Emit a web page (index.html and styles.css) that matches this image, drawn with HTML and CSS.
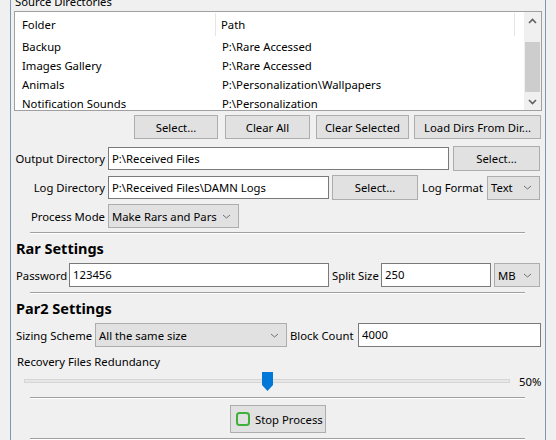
FILE: index.html
```html
<!DOCTYPE html>
<html>
<head>
<meta charset="utf-8">
<link rel="stylesheet" href="styles.css">
</head>
<body>
<div class="group">
  <div class="legend">Source Directories</div>
  <div class="list">
    <div class="lv">
      <div class="lv-head">
        <div class="h1">Folder</div>
        <div class="h2">Path</div>
      </div>
      <div class="lv-row"><div class="c1">Backup</div><div class="c2">P:\Rare Accessed</div></div>
      <div class="lv-row"><div class="c1">Images Gallery</div><div class="c2">P:\Rare Accessed</div></div>
      <div class="lv-row"><div class="c1">Animals</div><div class="c2">P:\Personalization\Wallpapers</div></div>
      <div class="lv-row"><div class="c1">Notification Sounds</div><div class="c2">P:\Personalization</div></div>
    </div>
    <div class="vscroll">
      <div class="sb-btn"><svg width="9" height="6" viewBox="0 0 9 6"><path d="M1 5 L4.5 1.5 L8 5" fill="none" stroke="#606060" stroke-width="1.6"/></svg></div>
      <div class="sb-track"><div class="sb-thumb"></div></div>
      <div class="sb-btn"><svg width="9" height="6" viewBox="0 0 9 6"><path d="M1 1 L4.5 4.5 L8 1" fill="none" stroke="#606060" stroke-width="1.6"/></svg></div>
    </div>
  </div>

  <div class="btn-row">
    <div class="btn w-select">Select...</div>
    <div class="btn w-clearall">Clear All</div>
    <div class="btn w-clearsel">Clear Selected</div>
    <div class="btn w-load">Load Dirs From Dir...</div>
  </div>

  <div class="row row-output">
    <div class="lbl">Output Directory</div>
    <div class="tb w-out">P:\Received Files</div>
    <div class="btn w-outsel">Select...</div>
  </div>

  <div class="row row-log">
    <div class="lbl">Log Directory</div>
    <div class="tb w-log">P:\Received Files\DAMN Logs</div>
    <div class="btn w-logsel">Select...</div>
    <div class="lbl2 logfmt">Log Format</div>
    <div class="combo w-logfmt"><span>Text</span><svg class="chev" width="9" height="5" viewBox="0 0 9 5"><path d="M1 1 L4.5 4 L8 1" fill="none" stroke="#707070" stroke-width="1"/></svg></div>
  </div>

  <div class="row row-mode">
    <div class="lbl">Process Mode</div>
    <div class="combo w-mode"><span>Make Rars and Pars</span><svg class="chev" width="9" height="5" viewBox="0 0 9 5"><path d="M1 1 L4.5 4 L8 1" fill="none" stroke="#707070" stroke-width="1"/></svg></div>
  </div>

  <div class="sep sep1"></div>

  <div class="heading h-rar">Rar Settings</div>

  <div class="row row-pw">
    <div class="lbl2 pw">Password</div>
    <div class="tb w-pw">123456</div>
    <div class="lbl2 split">Split Size</div>
    <div class="tb w-split">250</div>
    <div class="combo w-mb"><span>MB</span><svg class="chev" width="9" height="5" viewBox="0 0 9 5"><path d="M1 1 L4.5 4 L8 1" fill="none" stroke="#707070" stroke-width="1"/></svg></div>
  </div>

  <div class="sep sep2"></div>

  <div class="heading h-par">Par2 Settings</div>

  <div class="row row-size">
    <div class="lbl2 sizing">Sizing Scheme</div>
    <div class="combo w-sizing"><span>All the same size</span><svg class="chev" width="9" height="5" viewBox="0 0 9 5"><path d="M1 1 L4.5 4 L8 1" fill="none" stroke="#707070" stroke-width="1"/></svg></div>
    <div class="lbl2 block">Block Count</div>
    <div class="tb w-block">4000</div>
  </div>

  <div class="recov">Recovery Files Redundancy</div>

  <div class="slider-row">
    <div class="slider">
      <div class="track"></div>
      <svg class="thumb" width="11" height="19" viewBox="0 0 11 19"><path d="M0 0 H11 V13 L5.5 19 L0 13 Z" fill="#0078d7"/></svg>
    </div>
    <div class="pct">50%</div>
  </div>

  <div class="sep sep3"></div>

  <div class="stop-row">
    <div class="btn stop">
      <svg width="14" height="14" viewBox="0 0 14 14"><rect x="1" y="1" width="12" height="12" rx="2.5" fill="none" stroke="#3fb13a" stroke-width="2"/></svg>
      <span>Stop Process</span>
    </div>
  </div>

  <div class="sep sep4"></div>
</div>
</body>
</html>
```

FILE: styles.css
```css
* { box-sizing: border-box; }
html, body {
  margin: 0;
  padding: 0;
  background: #f0f0f0;
  width: 556px;
  height: 440px;
  overflow: hidden;
}
body {
  font-family: "Segoe UI", "Noto Sans", sans-serif;
  font-size: 11.3px;
  color: #000;
}
.group {
  margin-left: 10px;
  width: 536px;
  height: 460px;
  border-left: 1px solid #7d97b8;
  border-right: 1px solid #7d97b8;
  padding: 0 2px 0 3px;
}
.legend {
  margin-top: -6px;
  height: 16px;
  line-height: 16px;
  padding-left: 1px;
  white-space: nowrap;
}
.list {
  margin-top: 1px;
  height: 100px;
  width: 528px;
  border: 1px solid #a0a0a0;
  background: #fff;
  display: flex;
  overflow: hidden;
}
.lv {
  flex: 1;
  overflow: hidden;
}
.lv-head {
  display: flex;
  height: 25px;
  align-items: center;
}
.h1 {
  width: 201px;
  padding-left: 7px;
  border-right: 1px solid #e5e5e5;
  height: 23px;
  line-height: 23px;
}
.h2 {
  width: 299px;
  padding-left: 5px;
  border-right: 1px solid #e5e5e5;
  height: 23px;
  line-height: 23px;
}
.lv-row {
  display: flex;
  height: 19px;
  line-height: 19px;
  white-space: nowrap;
}
.c1 { width: 202px; padding-left: 7px; }
.c2 { padding-left: 5px; }
.vscroll {
  width: 17px;
  background: #f0f0f0;
  display: flex;
  flex-direction: column;
}
.sb-btn {
  height: 17px;
  display: flex;
  align-items: center;
  justify-content: center;
}
.sb-track {
  flex: 1;
  padding: 13px 1px 0 1px;
}
.sb-thumb {
  height: 50px;
  background: #cdcdcd;
}

.btn {
  background: #e1e1e1;
  border: 1px solid #adadad;
  display: flex;
  align-items: center;
  justify-content: center;
  white-space: nowrap;
}
.btn-row {
  margin-top: 4px;
  height: 24px;
  display: flex;
  justify-content: flex-end;
  padding-right: 2px;
}
.btn-row .btn { height: 24px; }
.w-select { width: 84px; }
.w-clearall { width: 85px; margin-left: 7px; }
.w-clearsel { width: 93px; margin-left: 6px; }
.w-load { width: 127px; margin-left: 5px; }

.row {
  display: flex;
  align-items: center;
  white-space: nowrap;
}
.lbl {
  width: 91px;
  text-align: right;
  margin-right: 3px;
}
.lbl2 {
  flex: none;
  overflow: visible;
}
.tb {
  flex: none;
  background: #fff;
  border: 1px solid #7a7a7a;
  height: 23px;
  line-height: 21px;
  padding-left: 3px;
  overflow: hidden;
}
.combo {
  flex: none;
  background: #e1e1e1;
  border: 1px solid #adadad;
  height: 23px;
  display: flex;
  align-items: center;
  justify-content: space-between;
  padding: 0 7px 0 3px;
}
.chev { display: block; }

.row-output { margin-top: 7px; height: 25px; }
.w-out { width: 341px; }
.w-outsel { width: 87px; height: 25px; margin-left: 4px; }

.row-log { margin-top: 4px; height: 25px; }
.w-log { width: 221px; }
.w-logsel { width: 86px; height: 25px; margin-left: 3px; }
.logfmt { margin-left: 4px; width: 65px; }
.w-logfmt { width: 53px; height: 24px; }

.row-mode { margin-top: 4px; height: 24px; }
.w-mode { width: 131px; height: 24px; }

.sep {
  margin-left: 16px;
  width: 495px;
  height: 2px;
  border-top: 1px solid #a0a0a0;
  border-bottom: 1px solid #ffffff;
}
.sep1 { margin-top: 4px; }
.heading {
  font-weight: bold;
  font-size: 14.5px;
  line-height: 20px;
  height: 20px;
  padding-left: 2px;
}
.h-rar { margin-top: 4px; }
.row-pw { margin-top: 5px; height: 24px; }
.pw { margin-left: 2px; width: 53px; }
.w-pw { width: 260px; height: 24px; }
.split { margin-left: 3px; width: 49px; }
.w-split { width: 110px; height: 24px; }
.w-mb { width: 46px; height: 24px; margin-left: 3px; }

.sep2 { margin-top: 5px; }
.h-par { margin-top: 4px; }
.row-size { margin-top: 5px; height: 24px; }
.sizing { margin-left: 2px; width: 79px; }
.w-sizing { width: 192px; height: 24px; }
.block { margin-left: 3px; width: 68px; }
.w-block { width: 183px; height: 24px; }

.recov {
  margin-top: 7px;
  line-height: 16px;
  height: 16px;
  padding-left: 3px;
}
.slider-row {
  margin-top: 1px;
  height: 20px;
  display: flex;
  align-items: center;
}
.slider {
  position: relative;
  margin-left: 10px;
  width: 486px;
  height: 20px;
}
.track {
  margin-top: 8px;
  height: 4px;
  background: #e7e7e7;
  border: 1px solid #d6d6d6;
}
.thumb {
  position: absolute;
  left: 238px;
  top: 1px;
}
.pct { margin-left: 9px; }

.sep3 { margin-top: 6px; }
.stop-row {
  margin-top: 6px;
  display: flex;
}
.stop {
  margin-left: 216px;
  width: 96px;
  height: 28px;
  gap: 5px;
  justify-content: flex-start;
  padding-left: 5px;
}
.stop svg { display: block; }
.sep4 { margin-top: 5px; }
```
